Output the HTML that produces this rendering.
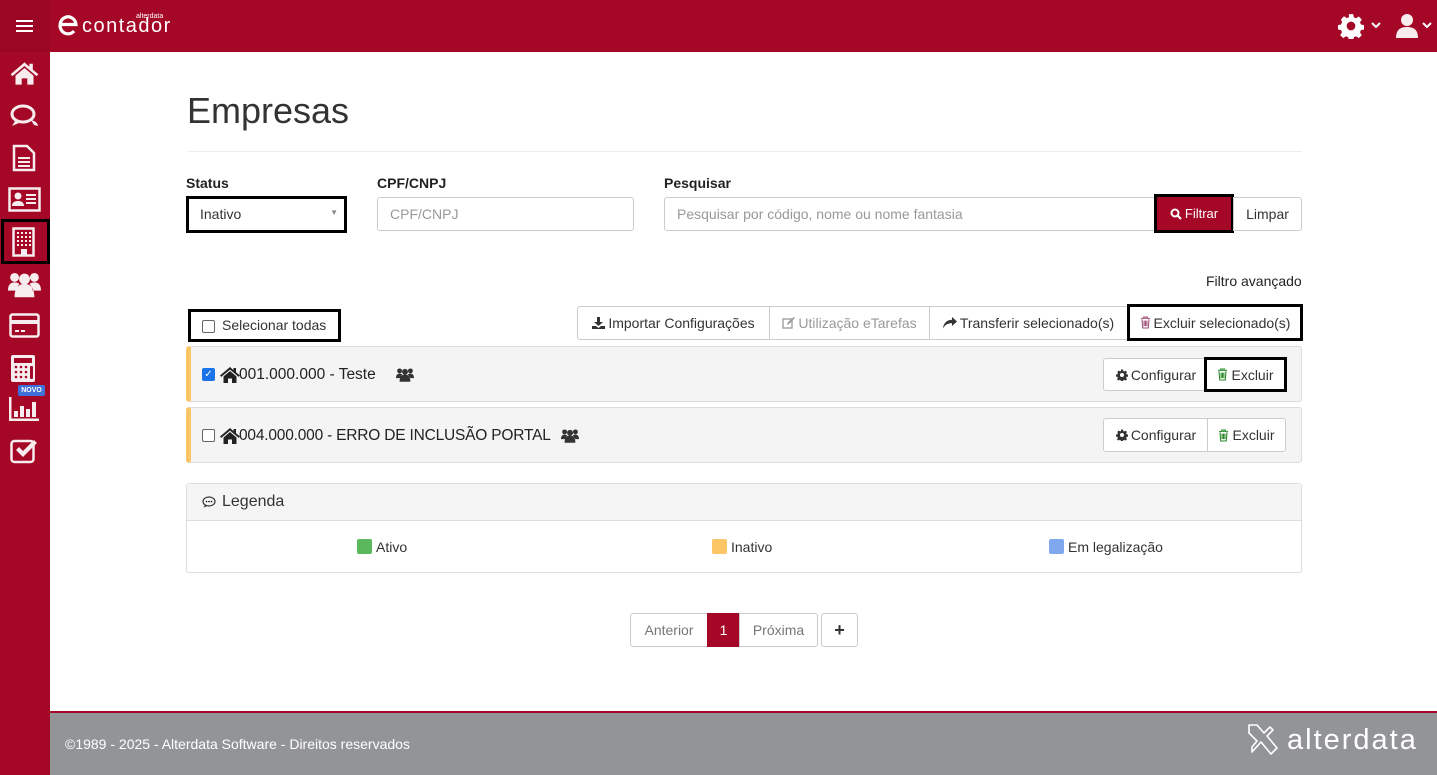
<!DOCTYPE html>
<html><head><meta charset="utf-8"><style>
*{box-sizing:border-box;margin:0;padding:0}
body{width:1437px;height:775px;overflow:hidden;background:#fff;font-family:"Liberation Sans",sans-serif;color:#333;position:relative;font-size:14px}
.a{position:absolute}
.top{left:0;top:0;width:1437px;height:52px;background:#a50727}
.side{left:0;top:52px;width:50px;height:723px;background:#a50727}
.ham{left:0;top:0;width:50px;height:52px;background:#9a0624}
.lbl{font-weight:bold;font-size:14px;color:#222}
.inp{border:1px solid #ccc;border-radius:3px;height:34px;font-size:14px;color:#999;padding:8px 12px}
.btn{border:1px solid #ccc;background:#fff;height:34px;font-size:14px;color:#333;display:flex;align-items:center;justify-content:center;gap:3px}
.row{left:186px;width:1116px;height:56px;background:#f4f4f4;border:1px solid #ddd;border-left:5px solid #fcc565;border-radius:3px}
.sq{display:inline-block;width:15px;height:15px;border-radius:2px;vertical-align:-2px;margin-right:4px}
.ic{fill:#f7ecee}
</style></head><body>
<svg width="0" height="0" style="position:absolute"><defs>
<symbol id="trash" viewBox="0 0 12 14"><path d="M1 2.5h10M4 2.5V1h4v1.5M2.2 3.5l.8 9.5h6l.8-9.5M4.5 5v6M6 5v6M7.5 5v6" fill="none" stroke="currentColor" stroke-width="1.2"/></symbol>
<symbol id="house" viewBox="0 0 20 18"><path d="M10 1L0 9.5l1.3 1.4L10 3.6l8.7 7.3L20 9.5l-4-3.3V2h-2.5v2.1z M3.5 10.5V17h4.5v-4.5h4V17h4.5v-6.5L10 5z" fill="currentColor"/></symbol>
<symbol id="users" viewBox="0 0 20 16"><g fill="currentColor"><circle cx="4" cy="4" r="2.7"/><circle cx="16" cy="4" r="2.7"/><circle cx="10" cy="5" r="3.3"/><path d="M0 12c0-4 2-5 4-5s3 1 3 1-2 2-2 4zM20 12c0-4-2-5-4-5s-3 1-3 1 2 2 2 4zM4 16c0-6 2.5-8 6-8s6 2 6 8z"/></g></symbol>
<symbol id="gear" viewBox="0 0 24 24"><path fill="currentColor" d="M10 1h4l.6 3 2 .9 2.6-1.7 2.8 2.8-1.7 2.6.9 2 3 .6v4l-3 .6-.9 2 1.7 2.6-2.8 2.8-2.6-1.7-2 .9-.6 3h-4l-.6-3-2-.9-2.6 1.7-2.8-2.8 1.7-2.6-.9-2-3-.6v-4l3-.6.9-2L2.8 5.8l2.8-2.8 2.6 1.7 2-.9zM12 8a4 4 0 100 8 4 4 0 000-8z"/></symbol>
</defs></svg>
<div class="a top"></div>
<div class="a ham"><div class="a" style="left:16px;top:20px;width:17px;height:1.5px;background:#fff"></div><div class="a" style="left:16px;top:25px;width:17px;height:1.5px;background:#fff"></div><div class="a" style="left:16px;top:30px;width:17px;height:1.5px;background:#fff"></div></div>
<svg class="a" style="left:57px;top:13px" width="22" height="24" viewBox="0 0 22 24"><path d="M3 11.5h16A8 8.5 0 1 0 17 18" fill="none" stroke="#fff" stroke-width="3.2"/></svg>
<div class="a" style="left:82px;top:15px;color:#fff;font-size:20px;letter-spacing:1.5px">contador</div>
<div class="a" style="left:136px;top:13px;color:#fff;font-size:7px">alterdata</div>
<svg class="a" style="left:1338px;top:13px;color:#fff" width="26" height="26"><use href="#gear"/></svg>
<svg class="a" style="left:1371px;top:22px" width="10" height="7"><path d="M1 1l4 4 4-4" fill="none" stroke="#fff" stroke-width="2"/></svg>
<svg class="a" style="left:1395px;top:13px" width="24" height="26" viewBox="0 0 24 26"><circle cx="12" cy="7" r="6" fill="#f7ecee"/><path d="M1 25c0-8 4-11 11-11s11 3 11 11z" fill="#f7ecee"/></svg>
<svg class="a" style="left:1422px;top:22px" width="10" height="7"><path d="M1 1l4 4 4-4" fill="none" stroke="#fff" stroke-width="2"/></svg>
<div class="a side"></div>
<svg class="a" style="left:10px;top:61px;color:#f7ecee" width="29" height="25"><use href="#house"/></svg>
<svg class="a" style="left:9px;top:103px" width="32" height="28" viewBox="0 0 32 28"><ellipse cx="14" cy="11" rx="11" ry="8" fill="none" stroke="#f7ecee" stroke-width="3"/><path class="ic" d="M6 18l-3 5 7-3zM22 17c5 1 7 4 7 6l-4-1z"/></svg>
<svg class="a" style="left:12px;top:144px" width="24" height="28" viewBox="0 0 24 28"><path d="M2 2h13l7 7v17H2z" fill="none" stroke="#f7ecee" stroke-width="2.5"/><path class="ic" d="M6 13h12v2H6zM6 17h12v2H6zM6 21h12v2H6z"/></svg>
<svg class="a" style="left:8px;top:187px" width="33" height="26" viewBox="0 0 33 26"><rect x="1.5" y="1.5" width="30" height="22" fill="none" stroke="#f7ecee" stroke-width="2.5"/><circle cx="10" cy="9" r="3.5" class="ic"/><path class="ic" d="M4 19c0-4 3-5 6-5s6 1 6 5zM18 7h10v2H18zM18 11h10v2H18zM18 15h10v2H18z"/></svg>
<div class="a" style="left:1px;top:219px;width:49px;height:45px;border:3px solid #000"></div>
<svg class="a" style="left:12px;top:227px" width="24" height="30" viewBox="0 0 24 30"><rect x="1.5" y="1.5" width="20" height="27" fill="none" stroke="#f7ecee" stroke-width="2.5"/><g class="ic"><rect x="5" y="5" width="2" height="2"/><rect x="9" y="5" width="2" height="2"/><rect x="13" y="5" width="2" height="2"/><rect x="17" y="5" width="2" height="2"/><rect x="5" y="9" width="2" height="2"/><rect x="9" y="9" width="2" height="2"/><rect x="13" y="9" width="2" height="2"/><rect x="17" y="9" width="2" height="2"/><rect x="5" y="13" width="2" height="2"/><rect x="9" y="13" width="2" height="2"/><rect x="13" y="13" width="2" height="2"/><rect x="17" y="13" width="2" height="2"/><rect x="5" y="17" width="2" height="2"/><rect x="9" y="17" width="2" height="2"/><rect x="13" y="17" width="2" height="2"/><rect x="17" y="17" width="2" height="2"/><rect x="9" y="22" width="6" height="6"/></g></svg>
<svg class="a" style="left:8px;top:270px;color:#f7ecee" width="33" height="28"><use href="#users"/></svg>
<svg class="a" style="left:9px;top:313px" width="31" height="26" viewBox="0 0 31 26"><rect x="1.5" y="1.5" width="28" height="22" rx="2" fill="none" stroke="#f7ecee" stroke-width="2.5"/><path class="ic" d="M2 7h27v4H2zM6 17h4v2H6zM12 17h4v2h-4z"/></svg>
<svg class="a" style="left:10px;top:354px" width="26" height="29" viewBox="0 0 26 29"><rect x="1" y="1" width="24" height="27" rx="2" fill="#f7ecee"/><rect x="4" y="4" width="18" height="5" fill="#a50727"/><g fill="#a50727"><circle cx="6" cy="13" r="1.3"/><circle cx="11" cy="13" r="1.3"/><circle cx="16" cy="13" r="1.3"/><circle cx="6" cy="18" r="1.3"/><circle cx="11" cy="18" r="1.3"/><circle cx="16" cy="18" r="1.3"/><circle cx="6" cy="23" r="1.3"/><circle cx="11" cy="23" r="1.3"/><circle cx="16" cy="23" r="1.3"/><rect x="20" y="12" width="3" height="13" rx="1"/></g></svg>
<div class="a" style="left:18px;top:385px;width:27px;height:11px;background:#3f6fd8;border-radius:2px;color:#fff;font-size:7px;font-weight:bold;text-align:center;line-height:11px">NOVO</div>
<svg class="a" style="left:8px;top:397px" width="32" height="25" viewBox="0 0 32 25"><path class="ic" d="M1 0h2.5v21.5H31V24H1z M6 14h4v6H6zM12 9h4v11h-4zM18 12h4v8h-4zM24 5h4v15h-4z"/></svg>
<svg class="a" style="left:10px;top:437px" width="29" height="27" viewBox="0 0 29 27"><rect x="1.5" y="4" width="22" height="21" rx="3" fill="none" stroke="#f7ecee" stroke-width="2.5"/><path class="ic" d="M6 13l3-3 4 4 11-11 3 3-14 14z"/></svg>

<div class="a" style="left:187px;top:90px;font-size:36px;color:#333">Empresas</div>
<div class="a" style="left:187px;top:151px;width:1115px;height:1px;background:#eee"></div>
<div class="a lbl" style="left:186px;top:175px">Status</div>
<div class="a lbl" style="left:377px;top:175px">CPF/CNPJ</div>
<div class="a lbl" style="left:664px;top:175px">Pesquisar</div>
<div class="a inp" style="left:186px;top:196px;width:161px;height:37px;border:3px solid #000;color:#333;padding:7px 11px;border-radius:0">Inativo<span class="a" style="right:6px;top:9px;font-size:8px;color:#888">&#9660;</span></div>
<div class="a inp" style="left:377px;top:197px;width:257px">CPF/CNPJ</div>
<div class="a inp" style="left:664px;top:197px;width:492px;border-radius:3px 0 0 3px">Pesquisar por código, nome ou nome fantasia</div>
<div class="a btn" style="left:1154px;top:194px;width:80px;height:39px;background:#a50727;color:#fff;border:3px solid #000;font-size:13px"><svg width="12" height="12" viewBox="0 0 12 12"><circle cx="5" cy="5" r="3.5" fill="none" stroke="#fff" stroke-width="2"/><path d="M7.5 7.5l3.5 3.5" stroke="#fff" stroke-width="2.2"/></svg>Filtrar</div>
<div class="a btn" style="left:1233px;top:197px;width:69px;border-radius:0 3px 3px 0">Limpar</div>
<div class="a" style="left:1206px;top:273px;font-size:14px;color:#222">Filtro avançado</div>

<div class="a" style="left:188px;top:309px;width:153px;height:33px;border:3px solid #000"></div>
<div class="a" style="left:202px;top:320px;width:13px;height:13px;border:1px solid #666;border-radius:2px;background:#fff"></div>
<div class="a" style="left:222px;top:317px;font-size:14px">Selecionar todas</div>

<div class="a btn" style="left:577px;top:306px;width:193px;border-radius:3px 0 0 3px"><svg width="13" height="12" viewBox="0 0 13 12"><path d="M5 0h3v5h3L6.5 9 2 5h3zM0 9h4l2.5 2L9 9h4v3H0z" fill="#333"/></svg>Importar Configurações</div>
<div class="a btn" style="left:769px;top:306px;width:161px;color:#999"><svg width="13" height="12" viewBox="0 0 13 12"><rect x="1" y="2" width="9" height="9" fill="none" stroke="#999" stroke-width="1.3"/><path d="M5 8l1-3 6-5 1 1-6 6z" fill="#999"/></svg>Utilização eTarefas</div>
<div class="a btn" style="left:929px;top:306px;width:199px"><svg width="14" height="12" viewBox="0 0 14 12"><path d="M9 0l5 4.5L9 9V6.3C5 6.3 2 7.5 0 11.5 0.5 6 4 3 9 2.8z" fill="#333"/></svg>Transferir selecionado(s)</div>
<div class="a btn" style="left:1127px;top:304px;width:176px;height:37px;border:3px solid #000"><svg width="11" height="13" style="color:#a0527a"><use href="#trash"/></svg>Excluir selecionado(s)</div>

<div class="a row" style="top:346px"></div>
<div class="a" style="left:202px;top:368px;width:13px;height:13px;background:#1a73e8;border-radius:2px;color:#fff;font-size:10px;line-height:13px;text-align:center">&#10003;</div>
<svg class="a" style="left:220px;top:366px;color:#222" width="20" height="18"><use href="#house"/></svg>
<div class="a" style="left:239px;top:366px;font-size:15.5px;color:#222">001.000.000 - Teste</div>
<svg class="a" style="left:396px;top:367px;color:#333" width="18" height="15"><use href="#users"/></svg>
<div class="a btn" style="left:1103px;top:358px;width:106px;height:33px;border-radius:3px 0 0 3px"><svg width="12" height="12"><use href="#gear"/></svg>Configurar</div>
<div class="a btn" style="left:1204px;top:357px;width:83px;height:35px;border:3px solid #000"><svg width="11" height="13" style="color:#2a8a2a"><use href="#trash"/></svg>Excluir</div>

<div class="a row" style="top:407px"></div>
<div class="a" style="left:202px;top:429px;width:13px;height:13px;border:1px solid #666;border-radius:2px;background:#fff"></div>
<svg class="a" style="left:220px;top:427px;color:#222" width="20" height="18"><use href="#house"/></svg>
<div class="a" style="left:239px;top:427px;font-size:15.5px;color:#222;letter-spacing:-0.2px">004.000.000 - ERRO DE INCLUSÃO PORTAL</div>
<svg class="a" style="left:561px;top:428px;color:#333" width="18" height="15"><use href="#users"/></svg>
<div class="a btn" style="left:1103px;top:418px;width:106px;height:34px;border-radius:3px 0 0 3px"><svg width="12" height="12"><use href="#gear"/></svg>Configurar</div>
<div class="a btn" style="left:1207px;top:418px;width:79px;height:34px;border-radius:0 3px 3px 0"><svg width="11" height="13" style="color:#2a8a2a"><use href="#trash"/></svg>Excluir</div>

<div class="a" style="left:186px;top:483px;width:1116px;height:90px;border:1px solid #ddd;border-radius:3px"></div>
<div class="a" style="left:187px;top:484px;width:1114px;height:37px;background:#f5f5f5;border-bottom:1px solid #ddd"></div>
<svg class="a" style="left:202px;top:496px" width="14" height="12" viewBox="0 0 14 12"><ellipse cx="7" cy="5.5" rx="6" ry="4.5" fill="none" stroke="#333" stroke-width="1.2"/><path d="M3 9l-1.5 2.5 4-1.5" fill="#333"/><circle cx="4.5" cy="5.5" r=".8"/><circle cx="7" cy="5.5" r=".8"/><circle cx="9.5" cy="5.5" r=".8"/></svg>
<div class="a" style="left:222px;top:493px;font-size:16px">Legenda</div>
<div class="a" style="left:357px;top:539px"><span class="sq" style="background:#5cb85c"></span>Ativo</div>
<div class="a" style="left:712px;top:539px"><span class="sq" style="background:#fcc565"></span>Inativo</div>
<div class="a" style="left:1049px;top:539px"><span class="sq" style="background:#7fa8ee"></span>Em legalização</div>

<div class="a btn" style="left:630px;top:613px;width:78px;color:#777;border-radius:3px 0 0 3px">Anterior</div>
<div class="a btn" style="left:707px;top:613px;width:33px;background:#a50727;border-color:#a50727;color:#fff">1</div>
<div class="a btn" style="left:739px;top:613px;width:79px;color:#777;border-radius:0 3px 3px 0">Próxima</div>
<div class="a btn" style="left:821px;top:613px;width:37px;border-radius:3px;font-weight:bold;font-size:18px">+</div>

<div class="a" style="left:50px;top:711px;width:1387px;height:64px;background:#929497;border-top:2px solid #a50727"></div>
<div class="a" style="left:65px;top:736px;color:#fff;font-size:14px">©1989 - 2025 - Alterdata Software - Direitos reservados</div>
<svg class="a" style="left:1246px;top:723px" width="36" height="36" viewBox="0 0 36 36"><path d="M3 2h8l7 8 6-6 3 3-6 6 10 12-6 6-10-12-9 10V24l5-6-8-8z" fill="none" stroke="#fff" stroke-width="1.6" stroke-linejoin="round"/></svg>
<div class="a" style="left:1287px;top:724px;color:#fff;font-size:29px;letter-spacing:2px">alterdata</div>
</body></html>
